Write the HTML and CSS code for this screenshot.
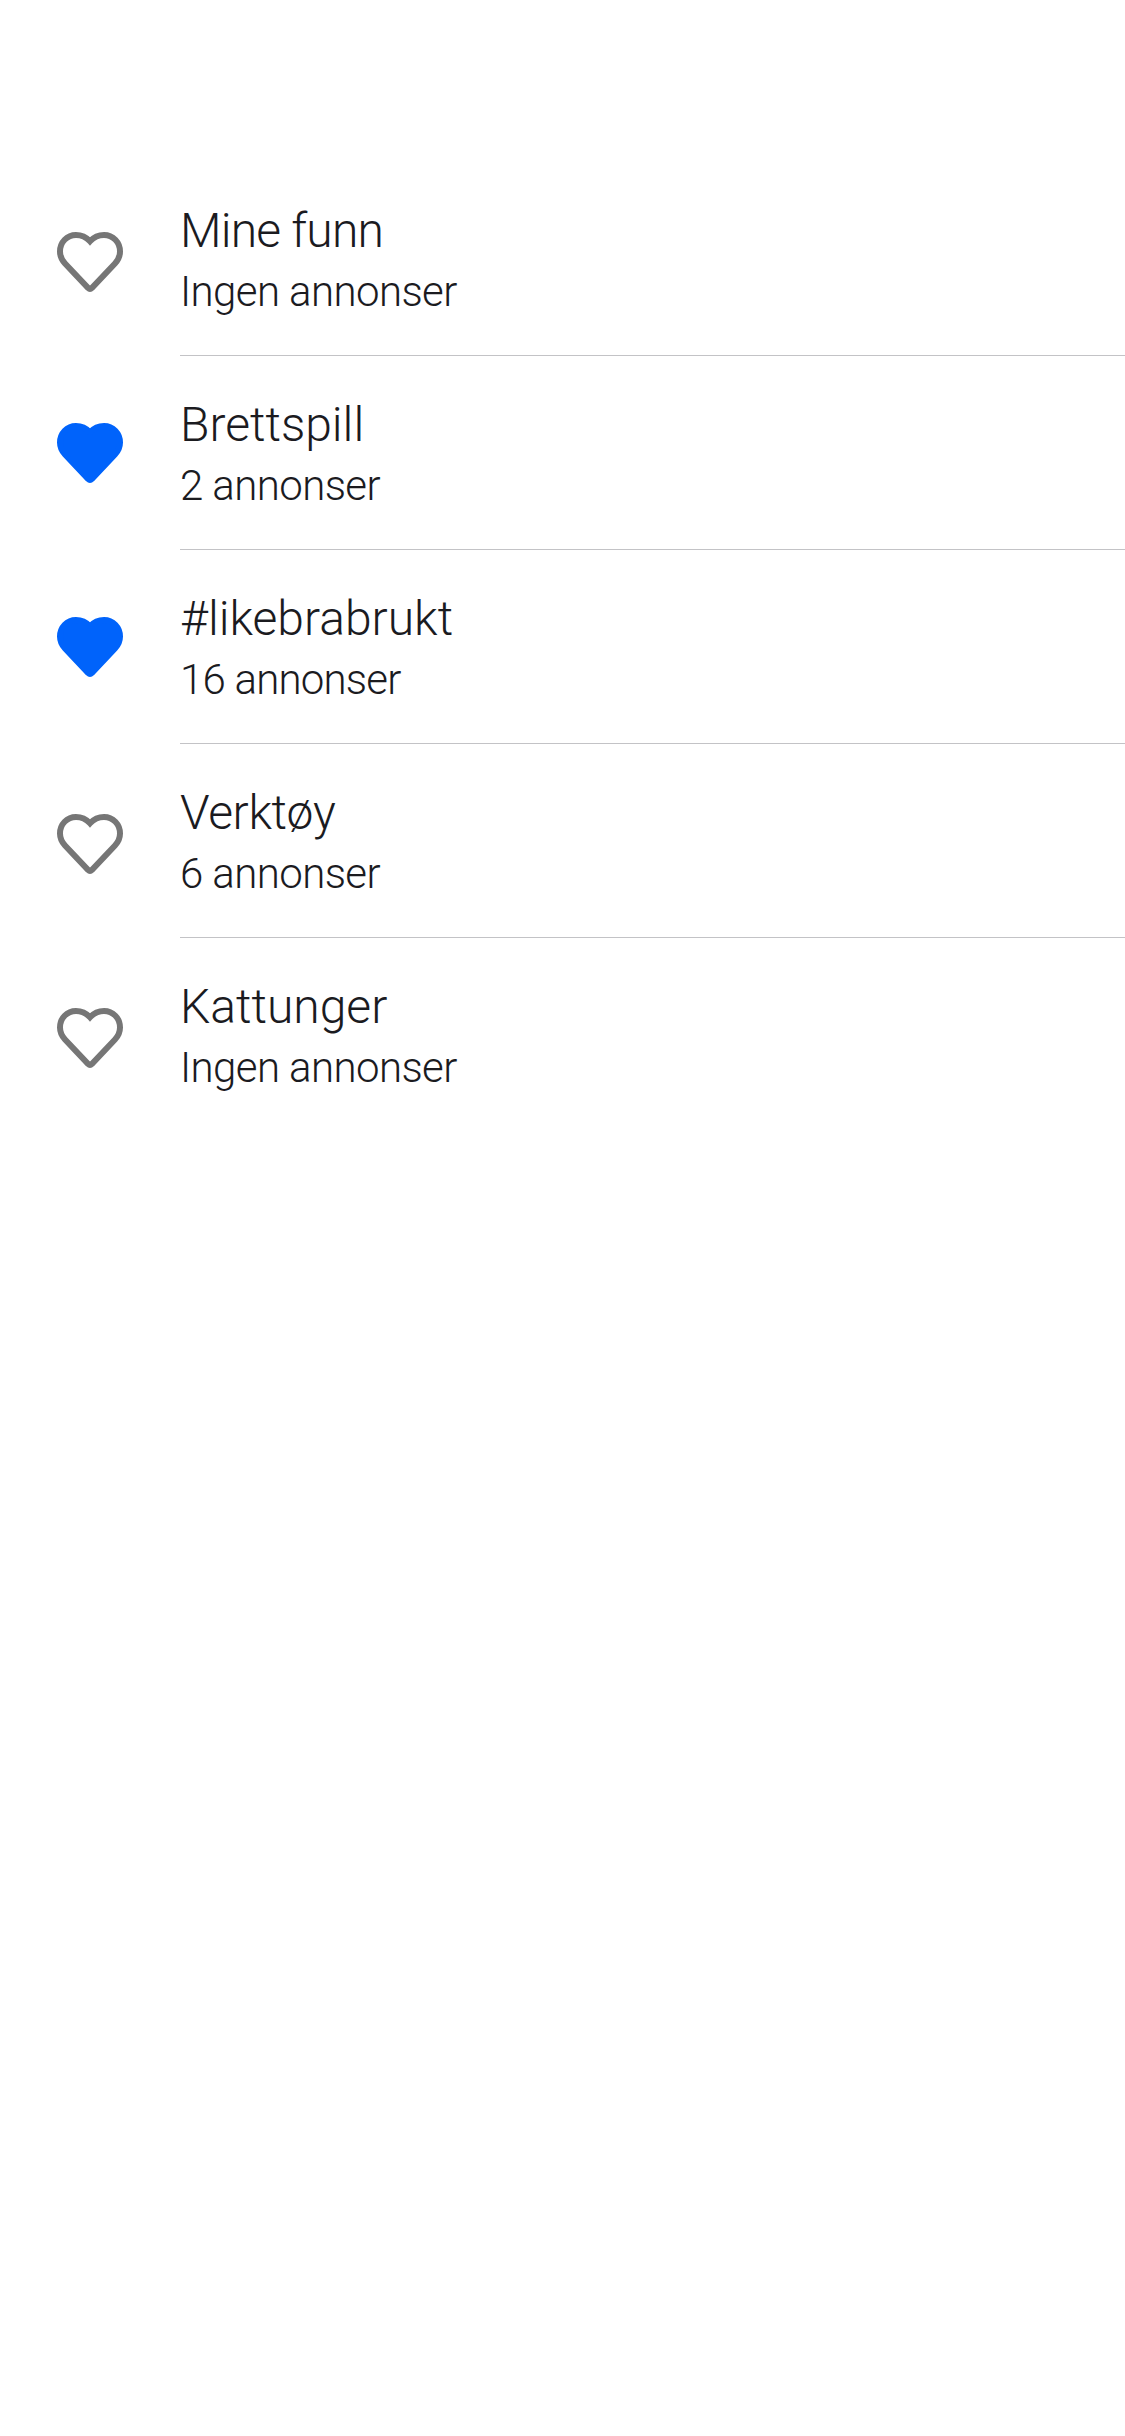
FILE: index.html
```html
<!DOCTYPE html>
<html lang="nb">
<head>
<meta charset="utf-8">
<title>Favoritter</title>
<link rel="stylesheet" href="styles.css">
</head>
<body>
<svg width="0" height="0" class="defs"><symbol id="heart" viewBox="0 0 66 60"><path d="M33 9.300C29 5 24.500 3 19 3C10 3 3 10.200 3 19.500C3 24 4.800 28 8 31.500L31 55.800Q33 57.700 35 55.800L58 31.500C61.200 28 63 24 63 19.500C63 10.200 56 3 47 3C41.500 3 37 5 33 9.300Z"/></symbol></svg>
<ul class="list">
<li class="row"><svg class="heart"><use href="#heart"/></svg><div class="content"><h2 class="title tight">Mine funn</h2><p class="sub">Ingen annonser</p></div></li>
<li class="row"><svg class="heart filled"><use href="#heart"/></svg><div class="content"><h2 class="title">Brettspill</h2><p class="sub">2 annonser</p></div></li>
<li class="row"><svg class="heart filled"><use href="#heart"/></svg><div class="content"><h2 class="title">#likebrabrukt</h2><p class="sub tight">16 annonser</p></div></li>
<li class="row"><svg class="heart"><use href="#heart"/></svg><div class="content"><h2 class="title snug">Verktøy</h2><p class="sub">6 annonser</p></div></li>
<li class="row"><svg class="heart"><use href="#heart"/></svg><div class="content"><h2 class="title">Kattunger</h2><p class="sub">Ingen annonser</p></div></li>
</ul>
</body>
</html>
```
FILE: styles.css
```css
body { margin: 0; background: #fff; color: #1b1b1f; font-family: Roboto, "Liberation Sans", sans-serif; font-weight: 300; }
.defs { display: block; }
.list { list-style: none; margin: 0; padding: 162px 0 0; }
.row { display: flex; height: 194px; padding-left: 57px; }
.heart { width: 66px; height: 60px; margin: 70px 57px 0 0; flex: none; fill: none; stroke: #767676; stroke-width: 6; }
.filled { margin-top: 67px; fill: #0063fb; stroke: #0063fb; }
.content { flex: 1; box-sizing: border-box; padding-top: 38px; border-bottom: 1px solid #c3c3c6; }
.row:last-child .content { border-bottom: 0; }
.title, .sub { margin: 0; font-weight: 300; white-space: nowrap; }
.title { font-size: 48px; line-height: 62px; }
.sub { font-size: 42px; line-height: 60px; letter-spacing: -0.6px; }
.tight { letter-spacing: -0.8px; }
.snug { letter-spacing: -0.4px; }
```
